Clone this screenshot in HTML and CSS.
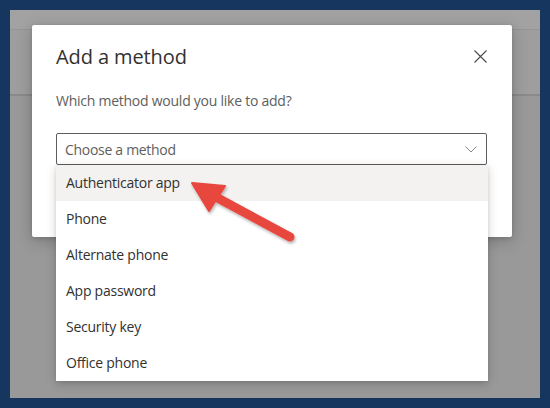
FILE: index.html
```html
<!DOCTYPE html>
<html>
<head>
<meta charset="utf-8">
<link rel="stylesheet" href="styles.css">
</head>
<body>
<div class="frame">
  <div class="page">
    <div class="dialog">
      <div class="dialog-head">
        <h1 class="title">Add a method</h1>
        <button class="close" aria-label="Close">
          <svg width="13" height="13" viewBox="0 0 13 13"><path d="M0.5 0.5 L12.5 12.5 M12.5 0.5 L0.5 12.5" stroke="#4a4947" stroke-width="1.1" fill="none"/></svg>
        </button>
      </div>
      <p class="subtitle">Which method would you like to add?</p>
      <div class="select">
        <div class="select-box">
          <span class="placeholder">Choose a method</span>
          <svg class="chevron" width="12" height="7" viewBox="0 0 12 7"><path d="M0.5 0.5 L6 6 L11.5 0.5" stroke="#8a8886" stroke-width="1" fill="none"/></svg>
        </div>
        <ul class="options">
          <li class="option active">Authenticator app</li>
          <li class="option">Phone</li>
          <li class="option">Alternate phone</li>
          <li class="option">App password</li>
          <li class="option">Security key</li>
          <li class="option">Office phone</li>
        </ul>
      </div>
    </div>
    <svg class="arrow" width="550" height="408" viewBox="0 0 550 408">
      <defs>
        <filter id="sh" x="-20%" y="-20%" width="140%" height="140%">
          <feDropShadow dx="1" dy="2" stdDeviation="1.5" flood-color="#000" flood-opacity="0.3"/>
        </filter>
      </defs>
      <g filter="url(#sh)" fill="#e8463d" stroke="#e8463d">
        <line x1="290" y1="237" x2="214" y2="196" stroke-width="9" stroke-linecap="round"/>
        <polygon points="192,183 225,186 209,211" stroke-width="2" stroke-linejoin="round"/>
      </g>
    </svg>
  </div>
</div>
</body>
</html>
```
FILE: styles.css
```css
* { box-sizing: border-box; }
html, body { margin: 0; padding: 0; }
body {
  width: 550px;
  height: 408px;
  overflow: hidden;
  font-family: "Open Sans", "Noto Sans", sans-serif;
}
.frame {
  width: 550px;
  height: 408px;
  background: #16355f;
  padding: 10px;
}
.page {
  position: relative;
  width: 530px;
  height: 388px;
  padding: 15px 0 0 22px;
  background: linear-gradient(to bottom,
    #a2a2a2 0, #a2a2a2 19px,
    #959595 19px, #959595 20px,
    #9e9e9e 20px, #9e9e9e 84px,
    #8a8a8a 84px, #8a8a8a 86px,
    #999999 86px);
}
.dialog {
  position: relative;
  width: 480px;
  height: 212px;
  background: #ffffff;
  border-radius: 2px;
  padding: 0 24px;
  box-shadow: 0 4px 16px rgba(0,0,0,0.22), 0 1px 4px rgba(0,0,0,0.12);
}
.dialog-head {
  display: flex;
  justify-content: space-between;
  align-items: center;
  height: 62px;
  padding-top: 1px;
}
.title {
  margin: 0;
  font-size: 20px;
  font-weight: 500;
  color: #323130;
  letter-spacing: -0.1px;
}
.close {
  border: 0;
  background: none;
  padding: 0;
  width: 13px;
  height: 13px;
  margin-right: 1px;
  display: flex;
}
.subtitle {
  margin: 4px 0 0;
  font-size: 14px;
  color: #605e5c;
  line-height: 20px;
  letter-spacing: -0.25px;
}
.select {
  position: relative;
  margin-top: 22px;
  width: 431px;
}
.select-box {
  height: 32px;
  border: 1px solid #605e5c;
  border-radius: 2px;
  display: flex;
  align-items: center;
  justify-content: space-between;
  padding: 0 8px 0 8px;
}
.placeholder {
  font-size: 14px;
  color: #605e5c;
  letter-spacing: -0.3px;
}
.chevron { margin-right: 1px; margin-top: 1px; }
.options {
  position: absolute;
  top: 32px;
  left: 0;
  width: 432px;
  margin: 0;
  padding: 0;
  list-style: none;
  background: #ffffff;
  box-shadow: 0 3px 10px rgba(0,0,0,0.18), 0 1px 3px rgba(0,0,0,0.1);
  z-index: 2;
}
.option {
  height: 36px;
  line-height: 36px;
  padding-left: 10px;
  font-size: 14px;
  color: #323130;
  letter-spacing: -0.25px;
}
.option.active { background: #f3f2f1; }
.arrow {
  position: absolute;
  left: -10px;
  top: -10px;
  z-index: 3;
  pointer-events: none;
}
```
